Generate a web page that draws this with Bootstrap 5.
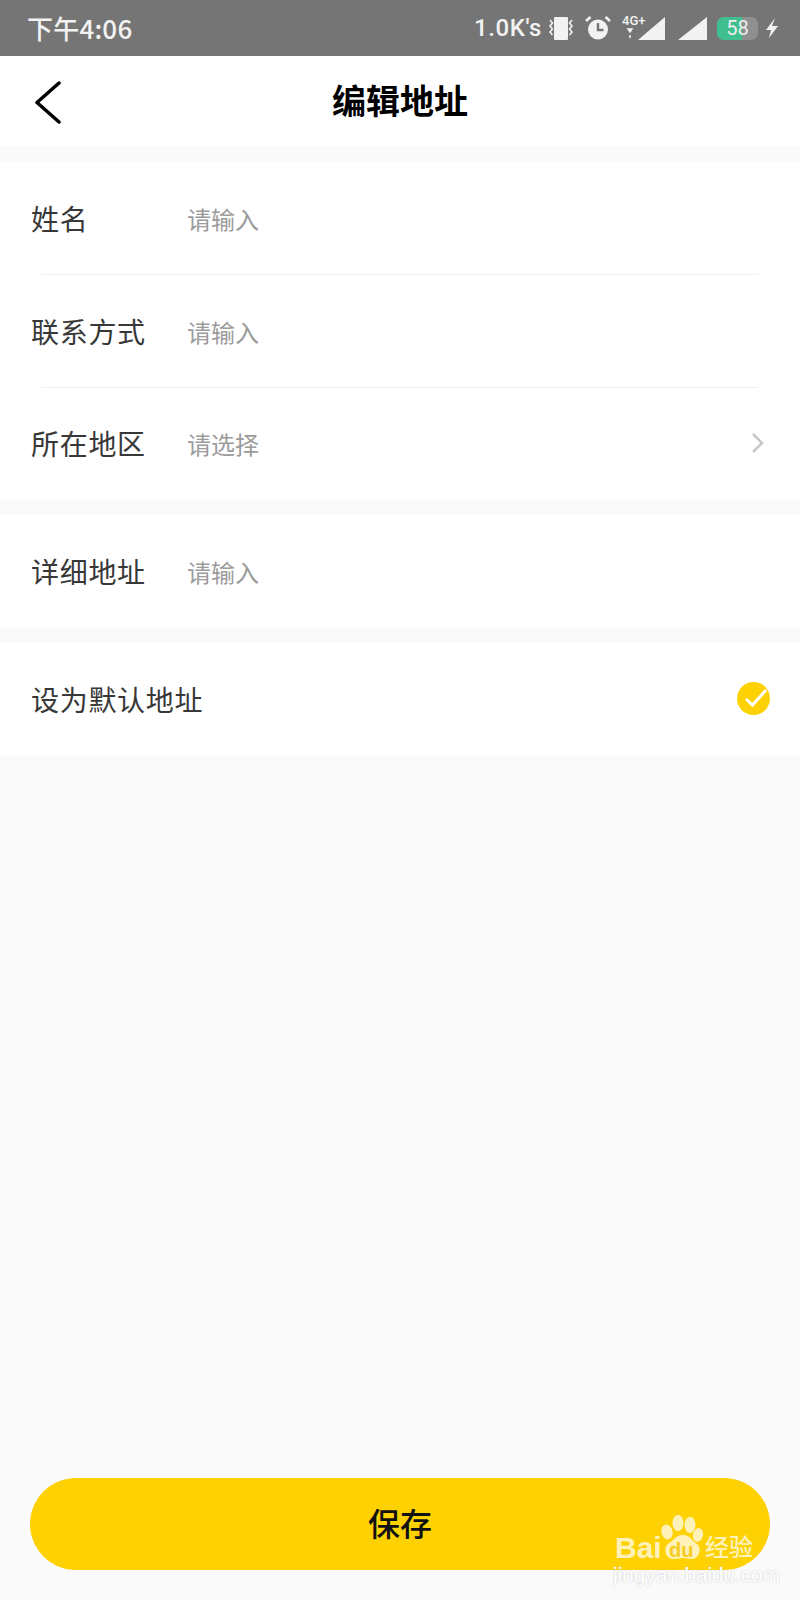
<!DOCTYPE html>
<html lang="zh">
<head>
<meta charset="utf-8">
<title>编辑地址</title>
<link rel="stylesheet" href="https://cdn.jsdelivr.net/npm/bootstrap@5.3.0/dist/css/bootstrap.min.css">
<style>
html,body{height:1600px;overflow:hidden}
body{font-family:"Noto Sans CJK SC","Noto Sans",sans-serif;background:#fafafa;color:#333}
.app-shell{height:1600px;position:relative}
.status-strip{height:56px;background:#757575;color:#f2f2f2;padding:0 21px 0 27px}
.status-time{font-size:26px;font-weight:500;line-height:1;letter-spacing:.2px}
.status-speed{font-size:24px;font-weight:500;line-height:1;font-family:Roboto,sans-serif;letter-spacing:.6px}
.ic-vib{margin-left:6px}
.ic-alarm{margin-left:11px}
.ic-net{margin-left:11px}
.ic-sig{margin-left:13px}
.ic-batt{margin-left:10px}
.ic-bolt{margin-left:7px}
.batt-shell{width:41px;height:23px;border-radius:7px;background:#8f8f8f;overflow:hidden;position:relative;display:block}
.batt-fill{display:block;height:100%;background:#3fbf8f}
.batt-num{position:absolute;inset:0;text-align:center;font-size:20px;line-height:23px;color:#eee;font-family:Roboto,sans-serif}
.title-bar{height:90px;background:#fff;padding:0 34px;position:relative}
.title-text{font-size:34px;font-weight:700;color:#000;position:absolute;left:0;right:0;top:-1px;text-align:center;line-height:90px;margin:0}
.back-mark{position:relative}
.form-block{background:#fff;margin-top:15px}
.form-first{margin-top:16px}
.form-line{height:112px;padding:0 30px 0 31px}
.form-up1{padding-bottom:1px}
.form-up2{padding-bottom:2px}
.form-tall{height:113px}
.line-rule{height:1px;background:#f0f0f0;margin:0 42px 0 41px}
.field-name{font-size:28px;width:156px;line-height:1;letter-spacing:.7px;color:#383838;flex:none}
.field-auto{width:auto}
.field-hint{font-size:24px;line-height:1;color:#9b9b9b;padding-top:2px}
.chev-mark{margin-right:5px}
.save-btn{position:absolute;left:30px;right:30px;top:1478px;height:92px;border-radius:46px;background:#fed103;border:0;color:#111;font-size:32px;font-weight:500;padding:0 0 4px}
.save-btn:hover,.save-btn:active{background:#fed103!important;color:#111!important}
.mark-wrap{position:absolute;left:613px;top:1515px;width:150px;height:68px;color:#fff;pointer-events:none}
.mark-bai{position:absolute;left:2px;top:18px;font:700 30px/1 "Liberation Sans",sans-serif;opacity:.72}
.mark-du{position:absolute;left:56px;top:25px;font:700 20px/1 "Liberation Sans",sans-serif;color:#f5cc20}
.mark-jy{position:absolute;left:92px;top:17px;font-size:24px;line-height:1.2;font-weight:500;opacity:.72;white-space:nowrap;letter-spacing:0}
.mark-url{position:absolute;left:0;top:50px;font:400 20.5px/1 "Liberation Sans",sans-serif;letter-spacing:.1px;white-space:nowrap;color:#fff;text-shadow:0 0 2px #c4c4c4}
.mark-paw{position:absolute;left:47px;top:0}
</style>
</head>
<body>
<div class="app-shell d-flex flex-column">
  <div class="status-strip d-flex align-items-center justify-content-between">
    <span class="status-time">下午4:06</span>
    <div class="d-flex align-items-center">
      <span class="status-speed">1.0K's</span>
      <svg class="ic-vib" width="26" height="26" viewBox="0 0 26 26" aria-hidden="true"><rect x="6" y="2" width="14" height="23" rx="1" fill="#f2f2f2"/><path d="M2 5l2.500 3-2.500 3 2.500 3-2.500 3 2.500 3M24 5l-2.500 3 2.500 3-2.500 3 2.500 3-2.500 3" fill="none" stroke="#f2f2f2" stroke-width="1.600"/></svg>
      <svg class="ic-alarm" width="26" height="26" viewBox="0 0 26 26" aria-hidden="true"><circle cx="13" cy="14.500" r="10" fill="#f2f2f2"/><path d="M13 8v7h5.500" fill="none" stroke="#757575" stroke-width="2.400"/><path d="M1 6l4.500-4M25 6l-4.500-4" stroke="#f2f2f2" stroke-width="2.600" fill="none"/></svg>
      <svg class="ic-net" width="43" height="28" viewBox="0 0 43 28" aria-hidden="true"><path d="M43 3v23H16z" fill="#f2f2f2"/><text x="0" y="11" font-size="13" font-weight="500" font-family="Roboto,sans-serif" fill="#f2f2f2">4G+</text><path d="M6 15h4l-2 3zM8 21v3" stroke="#f2f2f2" stroke-width="1.500" fill="#f2f2f2"/></svg>
      <svg class="ic-sig" width="29" height="28" viewBox="0 0 29 28" aria-hidden="true"><path d="M29 3v23H0z" fill="#f2f2f2"/></svg>
      <span class="batt-shell ic-batt"><span class="batt-fill" style="width:61%"></span><span class="batt-num">58</span></span>
      <svg class="ic-bolt" width="14" height="24" viewBox="0 0 14 24" aria-hidden="true"><path d="M10 2L1 14h5l-2 8 9-12H7z" fill="#f2f2f2"/></svg>
    </div>
  </div>
  <div class="title-bar d-flex align-items-center">
    <h1 class="title-text">编辑地址</h1>
    <svg class="back-mark" width="28" height="46" viewBox="0 0 28 46" aria-hidden="true"><path d="M25 5L3 24.500 25 44" fill="none" stroke="#000" stroke-width="3.500" stroke-linecap="round" stroke-linejoin="round"/></svg>
  </div>
  <div class="form-block form-first">
    <div class="form-line d-flex align-items-center"><span class="field-name">姓名</span><span class="field-hint">请输入</span></div>
    <div class="line-rule"></div>
    <div class="form-line form-up1 d-flex align-items-center"><span class="field-name">联系方式</span><span class="field-hint">请输入</span></div>
    <div class="line-rule"></div>
    <div class="form-line form-up2 d-flex align-items-center"><span class="field-name">所在地区</span><span class="field-hint flex-grow-1">请选择</span>
      <svg class="chev-mark" width="14" height="22" viewBox="0 0 14 22" aria-hidden="true"><path d="M2 2l9 9-9 9" fill="none" stroke="#c8c8c8" stroke-width="2.600"/></svg></div>
  </div>
  <div class="form-block">
    <div class="form-line form-tall form-up1 d-flex align-items-center"><span class="field-name">详细地址</span><span class="field-hint">请输入</span></div>
  </div>
  <div class="form-block">
    <div class="form-line form-tall form-up2 d-flex align-items-center justify-content-between"><span class="field-name field-auto">设为默认地址</span>
      <svg width="33" height="33" viewBox="0 0 33 33" aria-hidden="true"><circle cx="16.500" cy="16.500" r="16.500" fill="#fed103"/><path d="M9 17l6.500 6L29 8" fill="none" stroke="#fff" stroke-width="3"/></svg></div>
  </div>
  <button type="button" class="btn save-btn">保存</button>
  <div class="mark-wrap">
    <svg class="mark-paw" width="46" height="48" viewBox="0 0 46 48" aria-hidden="true" fill="#fff" fill-opacity=".72"><ellipse cx="18" cy="8" rx="5.500" ry="8"/><ellipse cx="30" cy="10" rx="5.500" ry="8"/><ellipse cx="7" cy="17" rx="5.500" ry="7.500" transform="rotate(-15 7 17)"/><ellipse cx="38" cy="20" rx="5" ry="7" transform="rotate(15 38 20)"/><path d="M23 20c7 0 8 5 14 9 5 4 3 15-6 15-3 0-5-1-8-1s-6 1-9 1c-9 0-11-11-6-15 6-4 8-9 15-9z"/></svg>
    <span class="mark-bai">Bai</span>
    <span class="mark-du">du</span>
    <span class="mark-jy">经验</span>
    <span class="mark-url">jingyan.baidu.com</span>
  </div>
</div>
</body>
</html>
